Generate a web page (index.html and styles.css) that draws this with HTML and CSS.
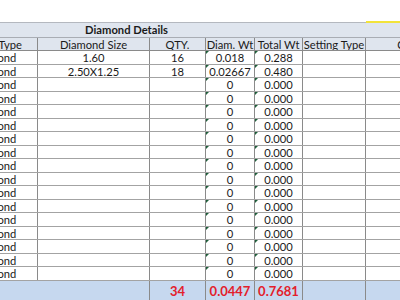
FILE: index.html
```html
<!DOCTYPE html>
<html>
<head>
<meta charset="utf-8">
<link rel="stylesheet" href="styles.css">
</head>
<body>
<div class="sheet">
<table class="grid">
<colgroup>
<col class="c0"><col class="c1"><col class="c2"><col class="c3"><col class="c4"><col class="c5"><col class="c6">
</colgroup>
<thead>
<tr class="group-row">
<th colspan="5" class="group">Diamond Details</th>
<th class="blank"></th>
<th class="blank flag"></th>
</tr>
<tr class="head-row">
<th class="type-head">Diamond Type</th>
<th>Diamond Size</th>
<th>QTY.</th>
<th>Diam. Wt</th>
<th>Total Wt</th>
<th>Setting Type</th>
<th>Color</th>
</tr>
</thead>
<tbody>
<tr><td class="type">Diamond</td><td>1.60</td><td>16</td><td class="mark">0.018</td><td class="mark">0.288</td><td></td><td></td></tr>
<tr><td class="type">Diamond</td><td>2.50X1.25</td><td>18</td><td class="mark">0.02667</td><td class="mark">0.480</td><td></td><td></td></tr>
<tr><td class="type">Diamond</td><td></td><td></td><td class="mark">0</td><td class="mark">0.000</td><td></td><td></td></tr>
<tr><td class="type">Diamond</td><td></td><td></td><td class="mark">0</td><td class="mark">0.000</td><td></td><td></td></tr>
<tr><td class="type">Diamond</td><td></td><td></td><td class="mark">0</td><td class="mark">0.000</td><td></td><td></td></tr>
<tr><td class="type">Diamond</td><td></td><td></td><td class="mark">0</td><td class="mark">0.000</td><td></td><td></td></tr>
<tr><td class="type">Diamond</td><td></td><td></td><td class="mark">0</td><td class="mark">0.000</td><td></td><td></td></tr>
<tr><td class="type">Diamond</td><td></td><td></td><td class="mark">0</td><td class="mark">0.000</td><td></td><td></td></tr>
<tr><td class="type">Diamond</td><td></td><td></td><td class="mark">0</td><td class="mark">0.000</td><td></td><td></td></tr>
<tr><td class="type">Diamond</td><td></td><td></td><td class="mark">0</td><td class="mark">0.000</td><td></td><td></td></tr>
<tr><td class="type">Diamond</td><td></td><td></td><td class="mark">0</td><td class="mark">0.000</td><td></td><td></td></tr>
<tr><td class="type">Diamond</td><td></td><td></td><td class="mark">0</td><td class="mark">0.000</td><td></td><td></td></tr>
<tr><td class="type">Diamond</td><td></td><td></td><td class="mark">0</td><td class="mark">0.000</td><td></td><td></td></tr>
<tr><td class="type">Diamond</td><td></td><td></td><td class="mark">0</td><td class="mark">0.000</td><td></td><td></td></tr>
<tr><td class="type">Diamond</td><td></td><td></td><td class="mark">0</td><td class="mark">0.000</td><td></td><td></td></tr>
<tr><td class="type">Diamond</td><td></td><td></td><td class="mark">0</td><td class="mark">0.000</td><td></td><td></td></tr>
<tr><td class="type">Diamond</td><td></td><td></td><td class="mark">0</td><td class="mark">0.000</td><td></td><td></td></tr>
</tbody>
<tfoot>
<tr class="total-row">
<td colspan="2" class="nolines"></td>
<td class="total">34</td>
<td class="total">0.0447</td>
<td class="total">0.7681</td>
<td></td>
<td></td>
</tr>
</tfoot>
</table>
</div>
</body>
</html>
```

FILE: styles.css
```css
html, body {
  margin: 0;
  padding: 0;
  background: #ffffff;
  overflow: hidden;
  width: 400px;
  height: 300px;
}

.sheet {
  padding-top: 21px;
  margin-left: -50px;
}

.grid {
  border-collapse: collapse;
  table-layout: fixed;
  width: 505px;
  font-family: Lato, "Liberation Sans", sans-serif;
  font-size: 11.2px;
  color: #1a1a1a;
}

.c0 { width: 87px; }
.c1 { width: 112px; }
.c2 { width: 56px; }
.c3 { width: 49px; }
.c4 { width: 48px; }
.c5 { width: 63px; }
.c6 { width: 90px; }

.grid th,
.grid td {
  padding: 0;
  text-align: center;
  white-space: nowrap;
  overflow: hidden;
  line-height: 11px;
}

.grid td {
  border-left: 1px solid #8a8a8a;
  border-right: 1px solid #8a8a8a;
  border-bottom: 1px solid #a3a3a3;
}

.group-row th {
  height: 14px;
  background: #dfe5ee;
  border-top: 1px solid #b4b8bf;
  border-bottom: 1px solid #a9adb4;
}

.group {
  font-weight: bold;
}

.flag {
  border-top: 2px solid #f2e33a !important;
}

.head-row th {
  height: 12px;
  background: #dfe5ee;
  font-weight: normal;
  border-left: 1px solid #8a8a8a;
  border-right: 1px solid #8a8a8a;
  border-bottom: 1px solid #8a8a8a;
}

.head-row .type-head {
  text-align: right;
  padding-right: 15px;
}

tbody tr:nth-child(odd) {
  height: 14px;
}

tbody tr:nth-child(even) {
  height: 13px;
}

.type {
  text-align: right;
  padding-right: 17px;
}

.mark {
  position: relative;
}

.mark::before {
  content: "";
  position: absolute;
  left: 0;
  top: 0;
  width: 0;
  height: 0;
  border-top: 3px solid #1e5f3a;
  border-right: 3px solid transparent;
}

.total-row td {
  height: 20px;
  background: #c6d8ef;
  border-bottom: none;
}

.total-row .nolines {
  border-left: none;
}

.total {
  color: #e3202b;
  font-weight: bold;
  font-size: 13px;
}
```
